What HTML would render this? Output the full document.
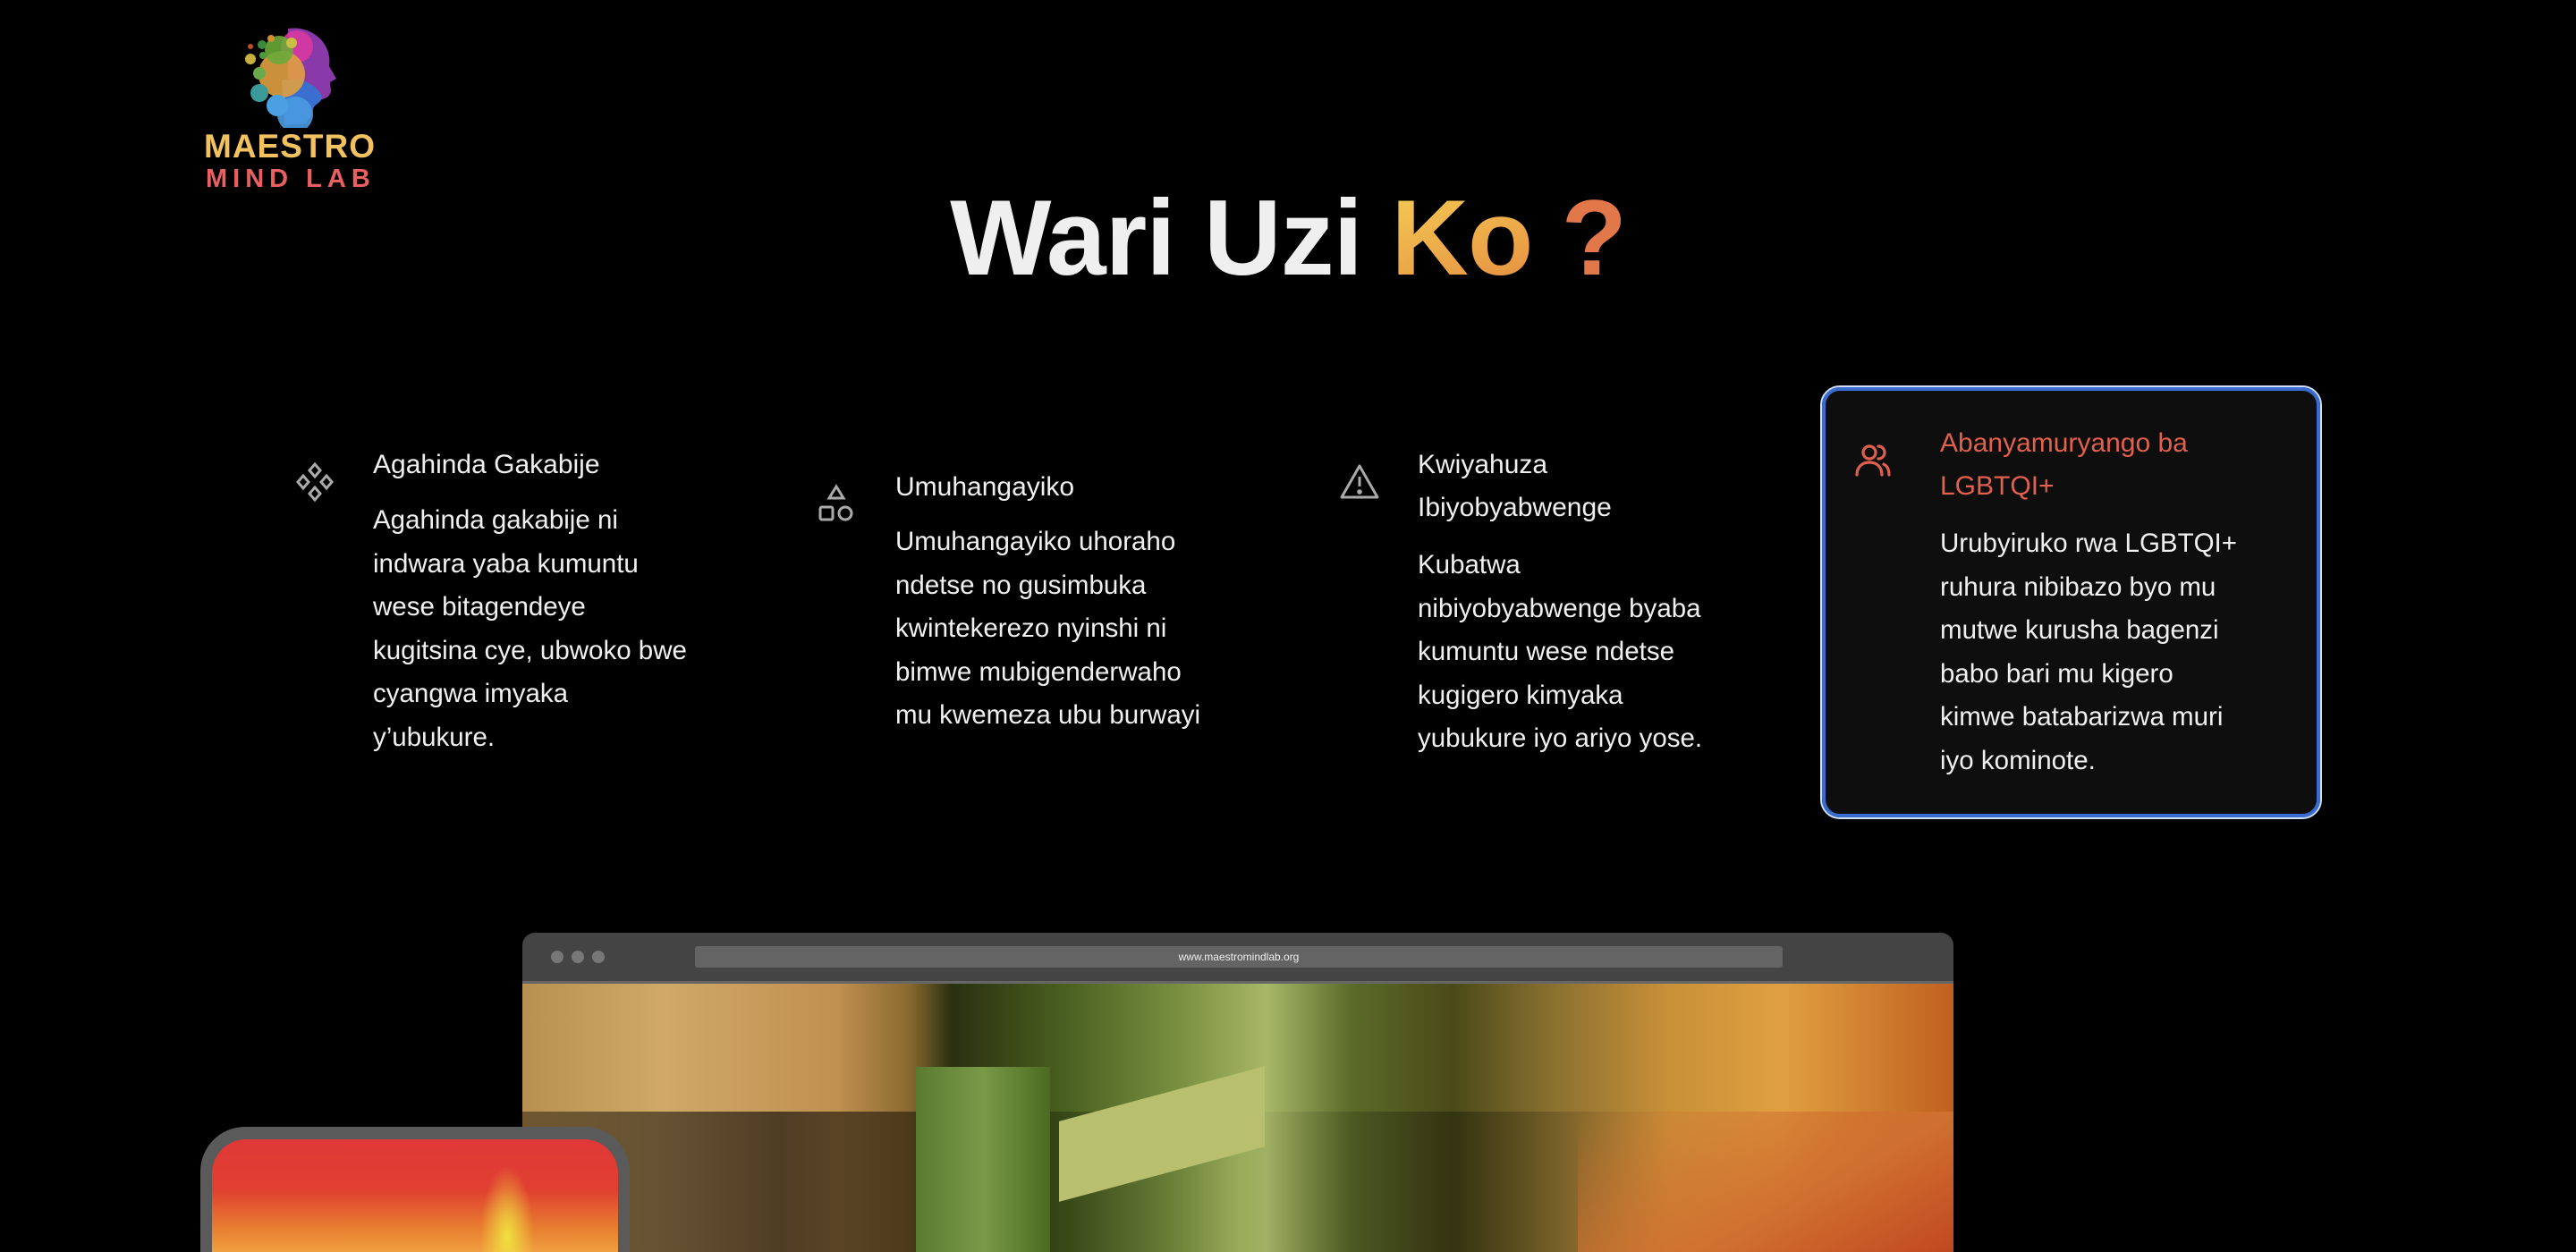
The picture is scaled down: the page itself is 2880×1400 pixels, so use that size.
<!DOCTYPE html>
<html><head><meta charset="utf-8"><style>
*{margin:0;padding:0;box-sizing:border-box}
html,body{width:2880px;height:1400px;overflow:hidden}
body{background:#000;position:relative;font-family:"Liberation Sans",sans-serif;color:#eee}
.a{position:absolute}
.h{font-size:30px;line-height:48px;white-space:nowrap;color:#f0f0f0}
.b{font-size:29.5px;line-height:48.5px;white-space:nowrap;color:#f0f0f0}
</style></head><body>

<!-- logo -->
<svg class="a" style="left:260px;top:18px" width="120" height="125" viewBox="0 0 120 125">
  <path d="M62 14 C88 10 112 30 108 56 L116 70 L109 74 L110 84 C108 94 98 92 92 96 L88 114 L62 120 Z" fill="#8a3aa8"/>
  <path d="M55 72 C75 66 98 78 100 92 C96 100 90 98 88 108 L82 120 L58 122 Z" fill="#3a6fcf"/>
  <circle cx="72" cy="34" r="18" fill="#d63aa0" opacity=".9"/>
  <circle cx="55" cy="65" r="26" fill="#e0a040" opacity=".9"/>
  <circle cx="52" cy="38" r="16" fill="#6aaa3a" opacity=".9"/>
  <circle cx="70" cy="110" r="20" fill="#4a9ae0" opacity=".9"/>
  <circle cx="50" cy="100" r="12" fill="#4aa0e0"/>
  <circle cx="30" cy="86" r="10" fill="#3a9a9a"/>
  <circle cx="30" cy="64" r="7" fill="#6aaa4a"/>
  <circle cx="20" cy="48" r="6" fill="#c8b040"/>
  <circle cx="34" cy="44" r="4" fill="#4a9a40"/>
  <circle cx="33" cy="32" r="5" fill="#3a8a40"/>
  <circle cx="43" cy="25" r="4" fill="#d09030"/>
  <circle cx="20" cy="34" r="3" fill="#c05020"/>
  <circle cx="66" cy="30" r="6" fill="#c8c040"/>
</svg>
<div class="a" style="left:228px;top:144px;font-size:37px;font-weight:bold;color:#f2c260;letter-spacing:1px;line-height:40px">MAESTRO</div>
<div class="a" style="left:230px;top:184px;font-size:29px;font-weight:bold;color:#e86060;letter-spacing:6px;line-height:32px">MIND LAB</div>

<!-- title -->
<div class="a" style="left:0;width:2880px;top:196px;text-align:center;font-size:120px;font-weight:bold;line-height:140px;letter-spacing:-1px">
<span style="color:#efefef">Wari Uzi </span><span style="background:linear-gradient(160deg,#f5d055,#e58a40);-webkit-background-clip:text;color:transparent">Ko</span><span style="color:#e2784a"> ?</span></div>

<!-- col 1 -->
<svg class="a" style="left:329px;top:516px" width="46" height="46" viewBox="0 0 46 46" fill="none" stroke="#aaa" stroke-width="3">
<path d="M23 3l6 7-6 7-6-7z"/><path d="M10 16l6 7-6 7-6-7z"/><path d="M36 16l6 7-6 7-6-7z"/><path d="M23 29l6 7-6 7-6-7z"/></svg>
<div class="a h" style="left:417px;top:496px">Agahinda Gakabije</div>
<div class="a b" style="left:417px;top:558px">Agahinda gakabije ni<br>indwara yaba kumuntu<br>wese bitagendeye<br>kugitsina cye, ubwoko bwe<br>cyangwa imyaka<br>y’ubukure.</div>

<!-- col 2 -->
<svg class="a" style="left:913px;top:540px" width="44" height="46" viewBox="0 0 44 46" fill="none" stroke="#aaa" stroke-width="3">
<path d="M22 4l8 13H14z"/><rect x="4" y="27" width="14" height="14" rx="2"/><circle cx="32" cy="34" r="7"/></svg>
<div class="a h" style="left:1001px;top:521px">Umuhangayiko</div>
<div class="a b" style="left:1001px;top:582px">Umuhangayiko uhoraho<br>ndetse no gusimbuka<br>kwintekerezo nyinshi ni<br>bimwe mubigenderwaho<br>mu kwemeza ubu burwayi</div>

<!-- col 3 -->
<svg class="a" style="left:1497px;top:518px" width="46" height="42" viewBox="0 0 46 42" fill="none" stroke="#aaa" stroke-width="3" stroke-linejoin="round">
<path d="M23 3L43 38H3z"/><path d="M23 15v11"/><circle cx="23" cy="32" r="1.3" fill="#aaa"/></svg>
<div class="a h" style="left:1585px;top:496px">Kwiyahuza<br>Ibiyobyabwenge</div>
<div class="a b" style="left:1585px;top:608px">Kubatwa<br>nibiyobyabwenge byaba<br>kumuntu wese ndetse<br>kugigero kimyaka<br>yubukure iyo ariyo yose.</div>

<!-- card -->
<div class="a" style="left:2035px;top:431px;width:561px;height:485px;border-radius:22px;border:2px solid #cfe0ff;"></div>
<div class="a" style="left:2037px;top:433px;width:557px;height:481px;border-radius:20px;border:4px solid #3a6bd0;background:#0e0e0e"></div>
<svg class="a" style="left:2073px;top:493px" width="42" height="44" viewBox="0 0 42 44" fill="none" stroke="#e06050" stroke-width="3.2" stroke-linecap="round">
<circle cx="17" cy="13" r="7"/><path d="M3 38c0-9 6-14 14-14s14 5 14 14"/><path d="M27 6a7 7 0 0 1 0 14"/><path d="M33 26c4 2 6 6 6 12"/></svg>
<div class="a h" style="left:2169px;top:472px;color:#e2604e">Abanyamuryango ba<br>LGBTQI+</div>
<div class="a b" style="left:2169px;top:584px">Urubyiruko rwa LGBTQI+<br>ruhura nibibazo byo mu<br>mutwe kurusha bagenzi<br>babo bari mu kigero<br>kimwe batabarizwa muri<br>iyo kominote.</div>

<!-- browser mock -->
<div class="a" style="left:584px;top:1043px;width:1600px;height:357px;border-radius:14px 14px 0 0;background:#444;overflow:hidden">
  <div class="a" style="left:32px;top:20px;width:14px;height:14px;border-radius:50%;background:#777"></div>
  <div class="a" style="left:55px;top:20px;width:14px;height:14px;border-radius:50%;background:#777"></div>
  <div class="a" style="left:78px;top:20px;width:14px;height:14px;border-radius:50%;background:#777"></div>
  <div class="a" style="left:193px;top:15px;width:1216px;height:24px;border-radius:3px;background:#646464;text-align:center;font-size:12px;line-height:24px;color:#eee">www.maestromindlab.org</div>
  <div class="a" style="left:0;top:54px;width:1600px;height:3px;background:#666"></div>
  <div class="a" style="left:0;top:57px;width:1600px;height:300px;background:
    linear-gradient(90deg,#b89050 0%,#d0a868 10%,#c09050 22%,#8a6a30 27%,#2a3010 30%,#4a6020 38%,#7a9040 46%,#a8b868 52%,#5a6a28 58%,#4a4a18 65%,#8a7030 72%,#c89038 80%,#e0a040 88%,#c06020 100%)"></div>
  <div class="a" style="left:0;top:200px;width:1600px;height:160px;background:linear-gradient(90deg,rgba(0,0,0,.4) 0%,rgba(0,0,0,.6) 18%,rgba(0,0,0,.4) 30%,rgba(0,0,0,0) 50%,rgba(0,0,0,.3) 65%,rgba(0,0,0,0) 80%)"></div>
  <div class="a" style="left:440px;top:150px;width:150px;height:210px;background:linear-gradient(90deg,#5a7a30,#7a9a48,#4a6a20);"></div>
  <div class="a" style="left:600px;top:180px;width:230px;height:90px;background:#b8c070;transform:skewY(-15deg)"></div>
  <div class="a" style="left:1180px;top:200px;width:420px;height:160px;background:linear-gradient(150deg,rgba(0,0,0,0),#d07030 60%,#c04820)"></div>
</div>

<!-- phone -->
<div class="a" style="left:224px;top:1260px;width:480px;height:140px;border-radius:50px 50px 0 0;background:#5a5a5a"></div>
<div class="a" style="left:237px;top:1274px;width:454px;height:126px;border-radius:38px 38px 0 0;background:
  radial-gradient(ellipse 30px 80px at 330px 110px,#f0e040,rgba(0,0,0,0)),
  linear-gradient(180deg,#e03838 0%,#e04030 45%,#e88030 80%,#f0a040 100%)"></div>

</body></html>
